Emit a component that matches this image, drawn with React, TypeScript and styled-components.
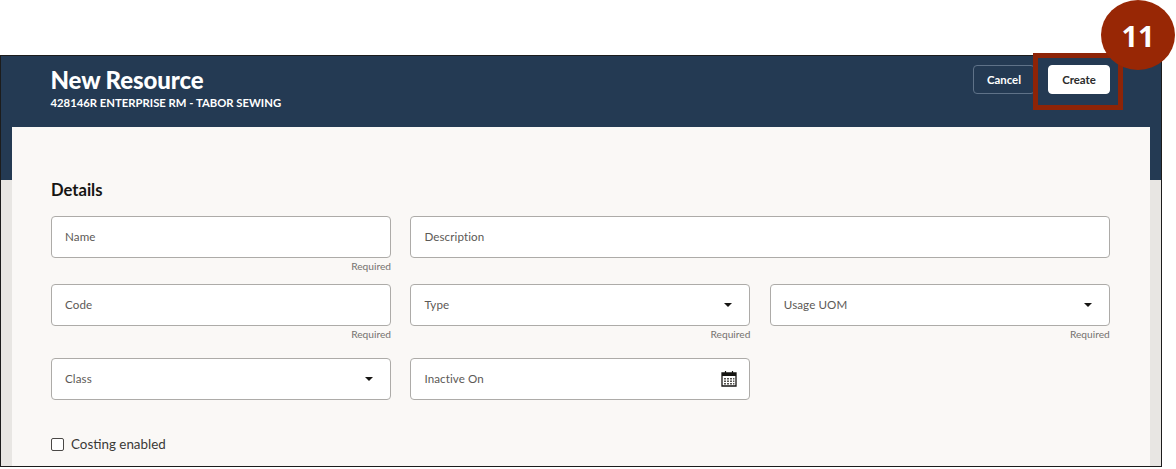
import React from "react";
import styled, { createGlobalStyle } from "styled-components";

const Global = createGlobalStyle`
  html, body { margin: 0; padding: 0; background: #fff; }
  body { font-family: Lato, "Noto Sans", sans-serif; width: 1176px; height: 469px; overflow: hidden; }
`;
const Page = styled.div`
  position: relative;
  width: 1176px;
  height: 469px;
  padding-top: 55px;
  box-sizing: border-box;
`;
const Frame = styled.div`
  width: 1162px;
  height: 412px;
  box-sizing: border-box;
  border: 1px solid #1c1c1c;
  border-left-width: 1.5px;
  border-right-width: 1.5px;
  overflow: hidden;
  background: linear-gradient(to bottom, #243a53 0, #243a53 124px, #e8e6e3 124px);
`;
const Header = styled.header`
  height: 71px;
  box-sizing: border-box;
  padding: 9px 51px 0 49.5px;
  display: flex;
  justify-content: space-between;
  align-items: flex-start;
`;
const TitleBlock = styled.div`
  color: #fff;
`;
const Title = styled.h1`
  margin: 0;
  font-size: 24px;
  line-height: 29px;
  font-weight: 900;
  letter-spacing: -0.1px;
`;
const Subtitle = styled.div`
  margin-top: 2px;
  font-size: 11.3px;
  line-height: 14px;
  font-weight: 700;
`;
const Actions = styled.div`
  display: flex;
  gap: 13px;
`;
const Button = styled.button<{ $primary?: boolean }>`
  width: 62px;
  height: 29px;
  border-radius: 4px;
  box-sizing: border-box;
  border: 1px solid ${(p) => (p.$primary ? "#fff" : "#5f7288")};
  background: ${(p) => (p.$primary ? "#fff" : "transparent")};
  color: ${(p) => (p.$primary ? "#2b2b2b" : "#fff")};
  font: 700 11.4px Lato, sans-serif;
  padding: 0;
`;
const Card = styled.main`
  margin: 0 11px 0 10.5px;
  height: 340px;
  box-sizing: border-box;
  background: #faf8f6;
  padding: 53px 39px 0 39.5px;
`;
const SectionTitle = styled.h2`
  margin: 0 0 16px;
  font-size: 16.6px;
  line-height: 21px;
  font-weight: 700;
  color: #161513;
  height: 20px;
`;
const FieldGrid = styled.div<{ $gap: number }>`
  display: grid;
  grid-template-columns: 340px 340px 340px;
  column-gap: 19.4px;
  margin-bottom: ${(p) => p.$gap}px;
`;
const FieldWrap = styled.div<{ $span?: number }>`
  grid-column: span ${(p) => p.$span ?? 1};
`;
const Box = styled.div`
  height: 42px;
  box-sizing: border-box;
  background: #fff;
  border: 1px solid #adaba8;
  border-radius: 4px;
  padding: 0 13px 1px;
  display: flex;
  align-items: center;
  justify-content: space-between;
  font-size: 11.6px;
  letter-spacing: 0.1px;
  color: #5c5956;
`;
const Helper = styled.div`
  height: 18px;
  font-size: 10.2px;
  line-height: 17px;
  text-align: right;
  color: #75726f;
`;
const Caret = styled.span`
  width: 0;
  height: 0;
  margin-right: 4px;
  border-left: 4.5px solid transparent;
  border-right: 4.5px solid transparent;
  border-top: 4.5px solid #161513;
`;
const CheckRow = styled.label`
  display: flex;
  align-items: center;
  gap: 7px;
  margin-top: 34px;
  font-size: 13.4px;
  line-height: 20px;
  color: #3a3836;
`;
const Check = styled.span`
  width: 13px;
  height: 13px;
  box-sizing: border-box;
  border: 1.3px solid #4a4846;
  border-radius: 2px;
  background: #fff;
`;
const CalendarSvg = styled.svg`
  width: 16px;
  height: 17px;
  display: block;
  margin-right: -1px;
`;
const Highlight = styled.div`
  position: absolute;
  left: 1033px;
  top: 53px;
  width: 90px;
  height: 57px;
  box-sizing: border-box;
  border: 5px solid #8e2407;
`;
const Badge = styled.div`
  position: absolute;
  left: 1101px;
  top: 0;
  width: 74px;
  height: 70px;
  border-radius: 50%;
  background: #982705;
  color: #fff;
  font: 700 29px/72px "Noto Sans", sans-serif;
  text-align: center;
`;

const Calendar = () => (
  <CalendarSvg viewBox="0 0 16 17" fill="none">
    <path d="M1 3h14v13H1z" stroke="#161513" strokeWidth="1.3" />
    <path d="M1 3h14v3H1z" fill="#161513" />
    <path d="M4.5 1v3M11.5 1v3" stroke="#161513" strokeWidth="1.2" />
    <path
      d="M3 8h2v1.4H3zM6 8h2v1.4H6zM9 8h2v1.4H9zM12 8h1.4v1.4H12zM3 10.5h2v1.4H3zM6 10.5h2v1.4H6zM9 10.5h2v1.4H9zM12 10.5h1.4v1.4H12zM3 13h2v1.4H3zM6 13h2v1.4H6zM9 13h2v1.4H9zM12 13h1.4v1.4H12z"
      fill="#55534f"
    />
  </CalendarSvg>
);

type FieldProps = { label: string; required?: boolean; span?: number; icon?: React.ReactNode };
const Field = ({ label, required, span, icon }: FieldProps) => (
  <FieldWrap $span={span}>
    <Box>
      <span>{label}</span>
      {icon}
    </Box>
    {required && <Helper>Required</Helper>}
  </FieldWrap>
);

export default function App() {
  return (
    <Page>
      <Global />
      <Frame>
        <Header>
          <TitleBlock>
            <Title>New Resource</Title>
            <Subtitle>428146R ENTERPRISE RM - TABOR SEWING</Subtitle>
          </TitleBlock>
          <Actions>
            <Button>Cancel</Button>
            <Button $primary>Create</Button>
          </Actions>
        </Header>
        <Card>
          <SectionTitle>Details</SectionTitle>
          <FieldGrid $gap={8}>
            <Field label="Name" required />
            <Field label="Description" span={2} />
          </FieldGrid>
          <FieldGrid $gap={14}>
            <Field label="Code" required />
            <Field label="Type" required icon={<Caret />} />
            <Field label="Usage UOM" required icon={<Caret />} />
          </FieldGrid>
          <FieldGrid $gap={0}>
            <Field label="Class" icon={<Caret />} />
            <Field label="Inactive On" icon={<Calendar />} />
          </FieldGrid>
          <CheckRow>
            <Check />
            Costing enabled
          </CheckRow>
        </Card>
      </Frame>
      <Highlight />
      <Badge>11</Badge>
    </Page>
  );
}
